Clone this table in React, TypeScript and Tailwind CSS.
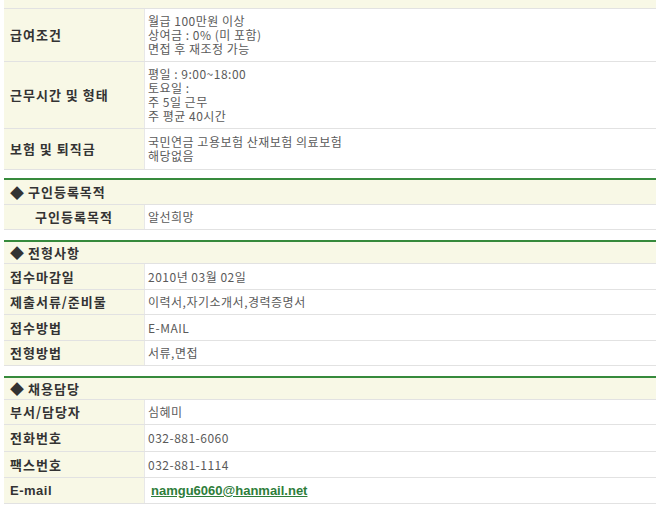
import type { ReactNode } from 'react';

function Row({ label, children, h, center }: { label: string; children: ReactNode; h: string; center?: boolean }) {
  return (
    <div className={`flex border-b border-[#e2e2e2] ${h}`}>
      <div
        className={`w-[141px] shrink-0 bg-[#f8f8e6] border-r border-[#e8e8e8] flex items-center text-[13px] font-bold tracking-[1px] text-[#333] ${center ? 'justify-center' : 'pl-[6px]'}`}
      >
        {label}
      </div>
      <div className="flex-1 flex flex-col justify-center pl-[3px] text-[12px] leading-[14px] tracking-[0.5px] text-[#5a5a5a]">
        {children}
      </div>
    </div>
  );
}

function Header({ title, h, first }: { title: string; h: string; first?: boolean }) {
  return (
    <div
      className={`${first ? 'mt-[8px]' : 'mt-[10px]'} border-t-2 border-t-[#368a3c] border-b border-b-[#e2e2e2] bg-[#f8f8e6] ${h} flex items-center pl-[6px] text-[13px] font-bold tracking-[1px] text-[#333]`}
    >
      <span className="mr-[4px] text-[14px] tracking-normal">◆</span>
      {title}
    </div>
  );
}

export default function App() {
  return (
    <div className="w-[656px] h-[508px] overflow-hidden bg-white pl-[4px] font-['Noto_Sans_CJK_KR',sans-serif]">
      {/* 근무조건 (잘린 상단) */}
      <div className="h-[9px] bg-[#f8f8e6] border-b border-[#e2e2e2]" />
      <Row label="급여조건" h="h-[53px]">
        <div>월급 100만원 이상</div>
        <div>상여금 : 0% (미 포함)</div>
        <div>면접 후 재조정 가능</div>
      </Row>
      <Row label="근무시간 및 형태" h="h-[67px]">
        <div>평일 : 9:00~18:00</div>
        <div>토요일 :</div>
        <div>주 5일 근무</div>
        <div>주 평균 40시간</div>
      </Row>
      <Row label="보험 및 퇴직금" h="h-[41px]">
        <div>국민연금 고용보험 산재보험 의료보험</div>
        <div>해당없음</div>
      </Row>

      {/* 구인등록목적 */}
      <Header title="구인등록목적" h="h-[27px]" first />
      <Row label="구인등록목적" h="h-[25px]" center>
        <div>알선희망</div>
      </Row>

      {/* 전형사항 */}
      <Header title="전형사항" h="h-[24px]" />
      <Row label="접수마감일" h="h-[26px]">
        <div>2010년 03월 02일</div>
      </Row>
      <Row label="제출서류/준비물" h="h-[25px]">
        <div>이력서,자기소개서,경력증명서</div>
      </Row>
      <Row label="접수방법" h="h-[26px]">
        <div>E-MAIL</div>
      </Row>
      <Row label="전형방법" h="h-[25px]">
        <div>서류,면접</div>
      </Row>

      {/* 채용담당 */}
      <Header title="채용담당" h="h-[24px]" />
      <Row label="부서/담당자" h="h-[25px]">
        <div>심혜미</div>
      </Row>
      <Row label="전화번호" h="h-[27px]">
        <div>032-881-6060</div>
      </Row>
      <Row label="팩스번호" h="h-[26px]">
        <div>032-881-1114</div>
      </Row>
      <div className="flex border-b border-[#e2e2e2] h-[26px]">
        <div className="w-[141px] shrink-0 bg-[#f8f8e6] border-r border-[#e8e8e8] flex items-center pl-[6px] font-['Liberation_Sans',sans-serif] text-[13px] font-bold tracking-[0.5px] text-[#333]">
          E-mail
        </div>
        <div className="flex-1 flex items-center pl-[6px]">
          <a className="font-['Liberation_Sans',sans-serif] text-[13px] font-bold text-[#2e7d3a] underline">
            namgu6060@hanmail.net
          </a>
        </div>
      </div>
    </div>
  );
}
